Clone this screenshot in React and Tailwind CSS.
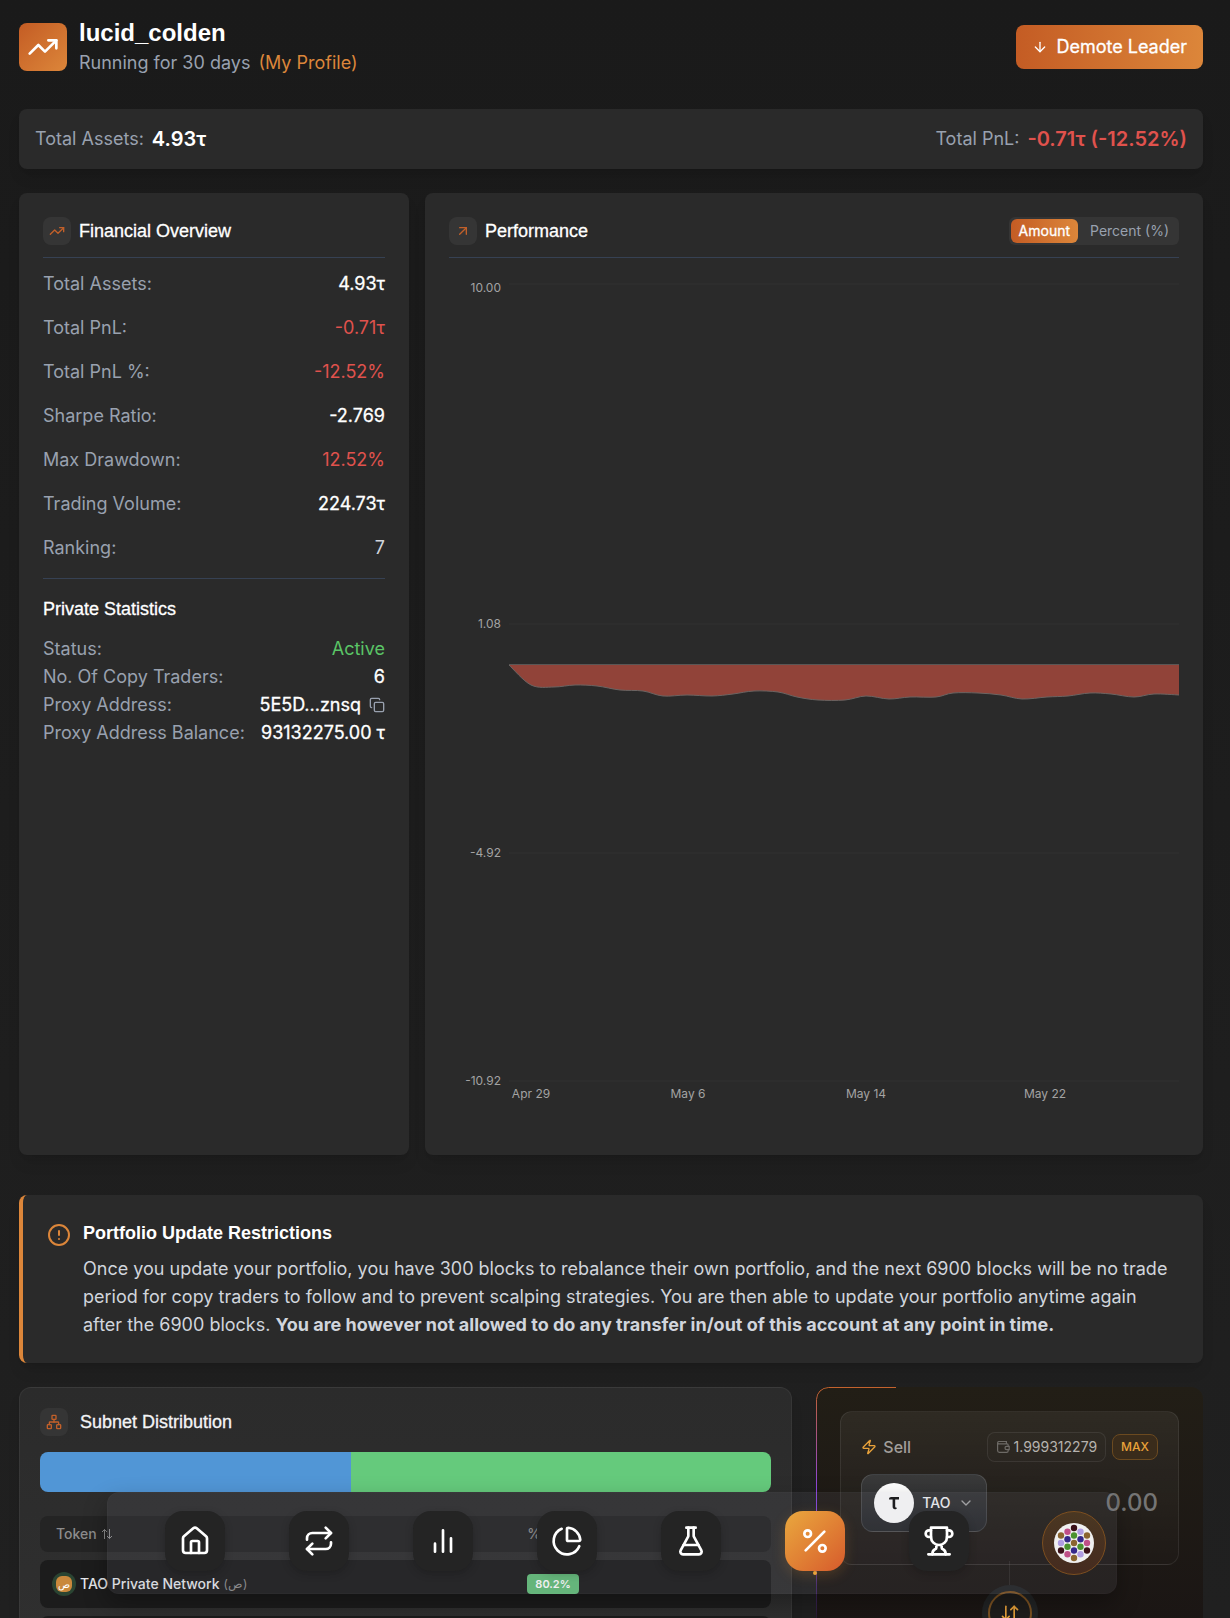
import React from "react";
import {
  ArrowDown,
  ArrowDownUp,
  ArrowUpRight,
  ChartPie,
  ChevronDown,
  CircleAlert,
  Copy,
  FlaskConical,
  House,
  Network,
  Percent,
  Repeat,
  TrendingUp,
  Zap,
} from "lucide-react";

const HEADING = "font-['Liberation_Sans',Arial,sans-serif]";
const SUBHEADING = "font-['Liberation_Sans',Arial,sans-serif] font-medium [-webkit-text-stroke:0.3px_currentColor]";
const STRONG_VALUE = "text-white [-webkit-text-stroke:0.3px_currentColor]";

const overview = [
  ["Total Assets:", "4.93τ", STRONG_VALUE],
  ["Total PnL:", "-0.71τ", "text-[#e0524d]"],
  ["Total PnL %:", "-12.52%", "text-[#e0524d]"],
  ["Sharpe Ratio:", "-2.769", STRONG_VALUE],
  ["Max Drawdown:", "12.52%", "text-[#e0524d]"],
  ["Trading Volume:", "224.73τ", STRONG_VALUE],
  ["Ranking:", "7", "text-gray-300"],
];

/* Points of the PnL curve inside the 730 x 861 chart. */
const curve = [
  [60, 395], [82, 415], [105, 417], [126, 415], [148, 416], [171, 420],
  [194, 421], [214, 426], [238, 425], [263, 426], [284, 424], [305, 421],
  [329, 422], [348, 427], [369, 430], [396, 430], [417, 426], [440, 429],
  [461, 427], [487, 427], [504, 423], [529, 423], [552, 425], [573, 429],
  [598, 427], [619, 426], [641, 423], [662, 424], [685, 427], [705, 424],
  [730, 425],
];

function smooth(points) {
  let d = `M${points[0][0]} ${points[0][1]}`;
  for (let i = 0; i < points.length - 1; i++) {
    const p0 = points[i - 1] || points[i];
    const p1 = points[i];
    const p2 = points[i + 1];
    const p3 = points[i + 2] || p2;
    d += ` C${p1[0] + (p2[0] - p0[0]) / 6} ${p1[1] + (p2[1] - p0[1]) / 6} ${
      p2[0] - (p3[0] - p1[0]) / 6
    } ${p2[1] - (p3[1] - p1[1]) / 6} ${p2[0]} ${p2[1]}`;
  }
  return d;
}

function PnlChart() {
  const grid = [
    [14, 22, "10.00"],
    [354, 358, "1.08"],
    [583, 587, "-4.92"],
    [811, 815, "-10.92"],
  ];
  const days = [
    [82, "Apr 29"],
    [239, "May 6"],
    [417, "May 14"],
    [596, "May 22"],
  ];
  const line = smooth(curve);
  return (
    <svg viewBox="0 0 730 861" className="block h-auto w-full" role="img" aria-label="PnL over time">
      {grid.map(([y, ty, label]) => (
        <g key={label}>
          <line x1="60" x2="730" y1={y} y2={y} stroke="#303030" />
          <text x="52" y={ty} textAnchor="end" className="fill-[#a3a3a3] text-[12px]">
            {label}
          </text>
        </g>
      ))}
      {days.map(([x, label]) => (
        <text key={label} x={x} y="828" textAnchor="middle" className="fill-[#a3a3a3] text-[12px]">
          {label}
        </text>
      ))}
      <path d={`${line} L730 395 Z`} fill="#914339" />
      <path d={line} fill="none" stroke="#6b6462" />
      <line x1="60" x2="730" y1="394.5" y2="394.5" stroke="#5a5655" />
    </svg>
  );
}

function IconTile({ children }) {
  return (
    <span className="flex size-7 shrink-0 items-center justify-center rounded-lg bg-[#353535] text-[#c2602a]">
      {children}
    </span>
  );
}

function Row({ label, value, tone = STRONG_VALUE, children }) {
  return (
    <div className="flex items-center justify-between">
      <span className="text-gray-400">{label}</span>
      <span className={`flex items-center gap-2 ${tone}`}>
        {value}
        {children}
      </span>
    </div>
  );
}

function WalletIcon() {
  return (
    <svg width="14" height="14" viewBox="0 0 14 14" fill="none" stroke="currentColor" strokeWidth="1.2" className="text-[#6d6a66]">
      <path d="M1.6 2.600v8a1.8 1.8 0 0 0 1.8 1.8h7.2a1.6 1.6 0 0 0 1.6-1.6V10M12.2 6V5.2a1.4 1.4 0 0 0-1.2-1.4H2.6a1.2 1.2 0 0 1 0-2.3h7.8v2" />
      <path d="M13.2 6.4h-2.6a1.6 1.6 0 0 0 0 3.2h2.6z" />
    </svg>
  );
}

function BarsIcon() {
  return (
    <svg width="32" height="32" viewBox="0 0 24 24" fill="none" stroke="currentColor" strokeWidth="2" strokeLinecap="round">
      <path d="M18 20V10M12 20V4M6 20v-6" />
    </svg>
  );
}

function TrophyIcon() {
  return (
    <svg width="32" height="32" viewBox="0 0 24 24" fill="none" stroke="currentColor" strokeWidth="2" strokeLinecap="round" strokeLinejoin="round">
      <path d="M6 9H4.5a2.5 2.5 0 0 1 0-5H6M18 9h1.5a2.5 2.5 0 0 0 0-5H18M4 22h16" />
      <path d="M10 14.66V17c0 .55-.47.98-.97 1.21C7.85 18.75 7 20.24 7 22M14 14.66V17c0 .55.47.98.97 1.21C16.15 18.75 17 20.24 17 22M18 2H6v7a6 6 0 0 0 12 0V2Z" />
    </svg>
  );
}

function SortIcon() {
  return (
    <svg width="12" height="12" viewBox="0 0 12 12" fill="none" stroke="currentColor" strokeWidth="1">
      <path d="M3.5 11V1.5M1 4l2.5-2.5L6 4M8.5 1v9.5M6 8l2.5 2.5L11 8" />
    </svg>
  );
}

function TaoIcon() {
  return (
    <svg width="12" height="14" viewBox="0 0 12 14" fill="#111">
      <path d="M1 3.4C1 1.8 1.8 1 3.2 1H11v2.4z" />
      <path d="M4.6 3h2.6v7.2c0 1.1.7 1.7 1.9 1.6-.5 1-1.2 1.5-2.1 1.5-1.5 0-2.4-1-2.4-2.7z" />
    </svg>
  );
}

const dots = [
  [0, -15, "#3a1018"], [0, -7.5, "#4a9230"], [0, 0, "#8a6530"], [0, 7.5, "#35288a"], [0, 15, "#8a6530"],
  [-6.5, -11.3, "#c04f88"], [-6.5, -3.7, "#35288a"], [-6.5, 3.7, "#4a9230"], [-6.5, 11.3, "#c04f88"],
  [6.5, -11.3, "#af9ce2"], [6.5, -3.7, "#35288a"], [6.5, 3.7, "#4a9230"], [6.5, 11.3, "#af9ce2"],
  [-13, -7.5, "#8a6530"], [-13, 0, "#af9ce2"], [-13, 7.5, "#3a1018"],
  [13, -7.5, "#8a6530"], [13, 0, "#c04f88"], [13, 7.5, "#3a1018"],
];

function Identicon() {
  return (
    <svg width="40" height="40" viewBox="-20 -20 40 40">
      <circle r="20" fill="#f0f0f0" />
      {dots.map(([x, y, c]) => (
        <circle key={`${x},${y}`} cx={x} cy={y} r="3.2" fill={c} />
      ))}
    </svg>
  );
}

const dockItems = [
  ["Home", House],
  ["Swap", Repeat],
  ["Markets", BarsIcon],
  ["Portfolio", ChartPie],
  ["Lab", FlaskConical],
  ["Copy trading", Percent],
  ["Leaderboard", TrophyIcon],
];

function Dock() {
  return (
    <div className="fixed inset-x-0 bottom-6 z-20 pl-[107px] pr-[113px]">
      <nav
        aria-label="Main"
        className="flex items-start justify-between rounded-xl border border-white/2 bg-[#787e8a]/12 py-[18px] pl-[57px] pr-[10px] shadow-[0_10px_24px_rgba(0,0,0,0.3)]"
      >
        {dockItems.map(([label, Icon]) => {
          const active = label === "Copy trading";
          return (
            <a
              key={label}
              href="#"
              aria-label={label}
              className={`relative flex size-[60px] items-center justify-center rounded-[18px] text-white ${
                active
                  ? "bg-linear-to-br from-[#e9a83e] to-[#d65a2c] shadow-[0_4px_14px_rgba(230,150,50,0.2)]"
                  : "bg-[#242424] shadow-[0_3px_8px_rgba(0,0,0,0.2)]"
              }`}
            >
              <Icon size={32} />
              {active && (
                <span className="absolute -bottom-1 left-1/2 size-1 -translate-x-1/2 rounded-full bg-[#e9a23a]" />
              )}
            </a>
          );
        })}
        <button
          type="button"
          aria-label="Account"
          className="ml-[9px] flex size-16 items-center justify-center rounded-full border border-[#7d4f20] bg-linear-to-b from-[#4a3722] to-[#452b1f]"
        >
          <Identicon />
        </button>
      </nav>
    </div>
  );
}

function SellPanel() {
  return (
    <section className="relative overflow-hidden rounded-xl bg-linear-to-b from-[#221e16] to-[#1a1514] to-[260px] p-6 pb-16">
      <svg className="pointer-events-none absolute left-0 top-0" width="80" height="260" fill="none">
        <defs>
          <linearGradient id="edge" gradientUnits="userSpaceOnUse" x1="0" y1="0" x2="0" y2="230">
            <stop offset="0" stopColor="#c4622c" />
            <stop offset=".45" stopColor="#8b45e0" />
            <stop offset=".6" stopColor="#7a3ee0" />
            <stop offset="1" stopColor="#7a3ee0" stopOpacity=".15" />
          </linearGradient>
        </defs>
        <path d="M80 .5H12.5A12 12 0 0 0 .5 12.5V260" stroke="url(#edge)" />
      </svg>
      <div className="rounded-xl border border-white/8 bg-linear-to-b from-white/6 to-white/1 px-5 pb-8 pt-5">
        <div className="flex items-center justify-between">
          <span className="flex items-center gap-1.5 text-[16px] font-medium text-[#a29f9b]">
            <Zap size={16} className="text-[#e9a23a]" />
            Sell
          </span>
          <div className="flex items-center gap-1.5">
            <span className="flex h-[30px] items-center gap-1 rounded-lg border border-white/8 bg-white/1 px-2 text-[14px] text-[#b5b2ae]">
              <WalletIcon />
              1.999312279
            </span>
            <button type="button" className="flex h-[26px] items-center rounded-lg border border-[#6b4a20] bg-[#3a2c1b] px-2 text-[12px] font-medium leading-4 text-[#e9a23a]">
              MAX
            </button>
          </div>
        </div>
        <div className="mt-3 flex items-center justify-between">
          <button
            type="button"
            className="flex h-[58px] shrink-0 items-center gap-2 rounded-xl border border-white/12 bg-linear-to-b from-[#3a3a3a] to-[#26282b] px-3 text-[14px] font-medium text-gray-100"
          >
            <span className="flex size-10 items-center justify-center rounded-full bg-white">
              <TaoIcon />
            </span>
            TAO
            <ChevronDown size={16} className="text-[#a5a5a5]" />
          </button>
          <input
            aria-label="Sell amount"
            placeholder="0.00"
            className="w-full min-w-0 bg-transparent text-right text-[24px] font-medium outline-none placeholder:text-[#757575]"
          />
        </div>
      </div>
      <div className="relative z-10 -mt-1 flex flex-col items-center">
        <span className="h-6 w-px bg-white/8" />
        <span className="flex size-14 items-center justify-center rounded-full bg-[#222425]">
          <button
            type="button"
            aria-label="Switch direction"
            className="flex size-11 items-center justify-center rounded-full border-2 border-[#7d5322] bg-[#1e1d1c] text-[#e9a23a]"
          >
            <ArrowDownUp size={20} />
          </button>
        </span>
      </div>
    </section>
  );
}

export default function App() {
  return (
    <div className="h-screen overflow-y-auto bg-linear-to-b from-[#1a1a1a] to-[#202020] font-[Inter,sans-serif] text-[18px] leading-7 text-white [scrollbar-width:none]">
      <main className="flex flex-col pb-8 pl-[19px] pr-[27px] pt-[17px]">
        <header className="flex items-center justify-between">
          <div className="flex items-center gap-3">
            <span className="flex size-12 items-center justify-center rounded-lg bg-linear-to-br from-[#c45c24] to-[#dc863a]">
              <TrendingUp size={32} />
            </span>
            <div>
              <h1 className={`text-2xl font-bold ${HEADING}`}>lucid_colden</h1>
              <p className="text-gray-400">
                Running for 30 days
                <a href="#" className="ml-2 text-[#dc863a]">
                  (My Profile)
                </a>
              </p>
            </div>
          </div>
          <button
            type="button"
            className={`flex h-11 items-center gap-2 rounded-lg bg-linear-to-r from-[#c45c24] to-[#dc863a] px-4 ${STRONG_VALUE}`}
          >
            <ArrowDown size={16} />
            Demote Leader
          </button>
        </header>

        <section className="mt-8 flex items-center justify-between rounded-lg bg-[#2a2a2a] p-4 shadow-lg">
          <p className="flex items-center gap-2 text-gray-400">
            Total Assets:
            <strong className="text-xl font-semibold text-white">4.93τ</strong>
          </p>
          <p className="flex items-center gap-2 text-gray-400">
            Total PnL:
            <strong className="text-xl font-semibold text-[#e0524d]">-0.71τ (-12.52%)</strong>
          </p>
        </section>

        <div className="mt-6 grid grid-cols-[390fr_778fr] gap-4">
          <section className="rounded-lg bg-[#2a2a2a] p-6 shadow-lg">
            <div className="flex items-center gap-2 border-b border-gray-700 pb-3">
              <IconTile>
                <TrendingUp size={16} />
              </IconTile>
              <h2 className={SUBHEADING}>Financial Overview</h2>
            </div>
            <div className="flex flex-col gap-4 pb-4 pt-3">
              {overview.map(([label, value, tone]) => (
                <Row key={label} label={label} value={value} tone={tone} />
              ))}
            </div>
            <div className="border-t border-gray-700 pt-4">
              <h3 className={`mb-3 ${SUBHEADING}`}>Private Statistics</h3>
              <Row label="Status:" value="Active" tone="text-[#5ac466]" />
              <Row label="No. Of Copy Traders:" value="6" />
              <Row label="Proxy Address:" value="5E5D...znsq">
                <button type="button" aria-label="Copy address" className="text-gray-400">
                  <Copy size={16} />
                </button>
              </Row>
              <Row label="Proxy Address Balance:" value="93132275.00 τ" />
            </div>
          </section>

          <section className="rounded-lg bg-[#2a2a2a] p-6 shadow-lg">
            <div className="mb-3 flex items-center justify-between border-b border-gray-700 pb-3">
              <div className="flex items-center gap-2">
                <IconTile>
                  <ArrowUpRight size={16} />
                </IconTile>
                <h2 className={SUBHEADING}>Performance</h2>
              </div>
              <div className="flex h-7 items-center gap-1 rounded-md bg-[#353535] p-0.5 text-[14px] leading-6">
                <button type="button" className={`rounded-md bg-linear-to-r from-[#c45c24] to-[#dc863a] px-2 ${STRONG_VALUE}`}>
                  Amount
                </button>
                <button type="button" className="rounded-md px-2 text-gray-400">
                  Percent (%)
                </button>
              </div>
            </div>
            <PnlChart />
          </section>
        </div>

        <section className="mt-10 flex items-start gap-3 rounded-lg border-l-4 border-[#dc863a] bg-[#2a2a2a] p-6 shadow-lg">
          <CircleAlert size={24} className="mt-1 shrink-0 text-[#dc863a]" />
          <div>
            <h3 className={`mb-2 font-bold ${HEADING}`}>Portfolio Update Restrictions</h3>
            <p className="text-gray-300">
              Once you update your portfolio, you have 300 blocks to rebalance their own portfolio, and the next 6900
              blocks will be no trade period for copy traders to follow and to prevent scalping strategies. You are then
              able to update your portfolio anytime again after the 6900 blocks.{" "}
              <strong className="font-bold">
                You are however not allowed to do any transfer in/out of this account at any point in time.
              </strong>
            </p>
          </div>
        </section>

        <div className="mt-6 grid grid-cols-[2fr_1fr] items-start gap-6">
          <section className="rounded-xl border border-white/5 bg-linear-to-b from-[#2b2b2b] to-[#303030] p-5 shadow-lg">
            <div className="flex items-center gap-3">
              <IconTile>
                <Network size={16} />
              </IconTile>
              <h2 className={`text-gray-100 ${SUBHEADING}`}>Subnet Distribution</h2>
            </div>
            <div className="mt-4 flex h-10 overflow-hidden rounded-lg">
              <span className="w-[42.5%] bg-[#5196d6]" />
              <span className="flex-1 bg-[#65ca7c]" />
            </div>
            <table className="mt-4 w-full border-separate border-spacing-x-0 border-spacing-y-2 text-left text-[14px] leading-5">
              <thead>
                <tr className="h-9 text-[#8c8c8c]">
                  <th scope="col" className="w-[65%] rounded-l-lg bg-[#242424] pl-4 font-medium">
                    <button type="button" className="flex items-center gap-1">
                      Token <SortIcon />
                    </button>
                  </th>
                  <th scope="col" className="rounded-r-lg bg-[#242424] pl-3 font-medium">%</th>
                </tr>
              </thead>
              <tbody>
                <tr className="h-12">
                  <td className="rounded-l-lg bg-[#1c1c1c] pl-3">
                    <div className="flex items-center gap-1">
                      <span className="flex size-6 items-center justify-center rounded-full bg-[#2a4432]">
                        <span className="flex size-4 items-center justify-center rounded-md bg-[#c9883c] text-[10px] leading-3">
                          ص
                        </span>
                      </span>
                      <span className="font-medium text-gray-200">TAO Private Network</span>
                      <span className="text-[12px] text-[#8c8c8c]">(ص)</span>
                    </div>
                  </td>
                  <td className="rounded-r-lg bg-[#1c1c1c] pl-3">
                    <div className="flex">
                      <span className="rounded-sm bg-[#62bd79] px-2 text-[11px] font-semibold leading-5">80.2%</span>
                    </div>
                  </td>
                </tr>
                <tr className="h-12">
                  <td className="rounded-l-lg bg-[#1c1c1c]" />
                  <td className="rounded-r-lg bg-[#1c1c1c]" />
                </tr>
              </tbody>
            </table>
          </section>
          <SellPanel />
        </div>
      </main>
      <Dock />
    </div>
  );
}
